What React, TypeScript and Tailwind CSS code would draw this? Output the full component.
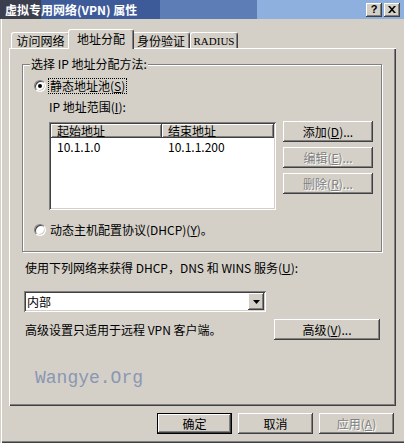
import React from 'react';

const raised =
  'bg-[#d4d0c8] shadow-[inset_-1px_-1px_#404040,inset_1px_1px_#ffffff,inset_-2px_-2px_#808080,inset_2px_2px_#d4d0c8]';
const sunken =
  'bg-white shadow-[inset_1px_1px_#808080,inset_-1px_-1px_#ffffff,inset_2px_2px_#404040,inset_-2px_-2px_#d4d0c8]';
const greyText = 'text-[#808080] [text-shadow:1px_1px_0_#ffffff]';

function Radio({ checked }: { checked?: boolean }) {
  return (
    <span className="flex h-[12px] w-[12px] shrink-0 items-center justify-center rounded-full border border-t-[#808080] border-l-[#808080] border-b-white border-r-white bg-white shadow-[inset_1px_1px_#404040,inset_-1px_-1px_#d4d0c8]">
      {checked && <span className="h-[4px] w-[4px] rounded-full bg-black" />}
    </span>
  );
}

function Btn({
  children,
  disabled,
  isDefault,
  className = '',
}: {
  children: React.ReactNode;
  disabled?: boolean;
  isDefault?: boolean;
  className?: string;
}) {
  if (isDefault) {
    return (
      <div className={`border border-black ${className}`}>
        <div className={`flex h-full w-full items-center justify-center ${raised}`}>{children}</div>
      </div>
    );
  }
  return (
    <div className={`flex items-center justify-center ${raised} ${disabled ? greyText : 'text-black'} ${className}`}>
      {children}
    </div>
  );
}

function GroupBox({ label, children }: { label: string; children: React.ReactNode }) {
  return (
    <div className="relative ml-[13px] mt-[16px] h-[188px] w-[360px] border border-[#808080] shadow-[1px_1px_0_#ffffff,inset_1px_1px_0_#ffffff]">
      <span className="absolute -top-[8px] left-[7px] bg-[#d4d0c8] px-[1px] leading-[14px]">{label}</span>
      {children}
    </div>
  );
}

const tabBase =
  'flex items-center justify-center rounded-t-[3px] border-t border-l border-white border-r border-r-[#404040] shadow-[inset_-1px_0_#808080] bg-[#d4d0c8]';

export default function App() {
  return (
    <div className="h-[443px] w-[404px] overflow-hidden bg-[#d4d0c8] font-['Noto_Sans_CJK_SC','Liberation_Sans',sans-serif] text-[12px] leading-[14px] text-black shadow-[inset_1px_0_#d4d0c8,inset_2px_0_#ffffff,inset_0_-1px_#404040,inset_0_-2px_#808080]">
      {/* title bar */}
      <div className="flex h-[19px] items-center justify-between bg-[linear-gradient(to_right,#3b3e4d_0px,#3b3e4d_41px,#3d5b99_41px,#3d5b99_160px,#5d7db6_160px,#5d7db6_257px,#8eb0de_257px)] pl-[5px] pr-[4px]">
        <span className="font-bold text-white">虚拟专用网络(VPN) 属性</span>
        <div className="flex gap-[2px]">
          <div className={`flex h-[14px] w-[16px] items-center justify-center ${raised}`}>
            <span className="font-['Liberation_Sans'] text-[11px] font-bold leading-none">?</span>
          </div>
          <div className={`flex h-[14px] w-[16px] items-center justify-center ${raised}`}>
            <svg width="8" height="7" viewBox="0 0 8 7">
              <path d="M0 0h2l2 2.2L6 0h2L5 3.5 8 7H6L4 4.8 2 7H0l3-3.5z" fill="#000" />
            </svg>
          </div>
        </div>
      </div>

      {/* tabs */}
      <div className="ml-[11px] mt-[10px] flex h-[19px] items-end">
        <div className={`${tabBase} h-[16px] w-[59px]`}>访问网络</div>
        <div className={`${tabBase} relative z-10 -mx-[2px] -mb-[1px] h-[20px] w-[66px] pb-[2px]`}>地址分配</div>
        <div className={`${tabBase} h-[16px] w-[58px]`}>身份验证</div>
        <div className={`${tabBase} h-[16px] w-[48px] font-['Liberation_Serif'] text-[11px]`}>RADIUS</div>
      </div>

      {/* tab panel */}
      <div className="ml-[9px] flex h-[358px] w-[387px] flex-col shadow-[inset_1px_1px_#ffffff,inset_-1px_-1px_#404040,inset_-2px_-2px_#808080]">
        <GroupBox label="选择 IP 地址分配方法:">
          <div className="flex flex-col pl-[11px] pt-[13px]">
            <div className="flex h-[16px] items-center gap-[2px]">
              <Radio checked />
              <span className="border border-dotted border-black px-[1px]">
                静态地址池(<u>S</u>)
              </span>
            </div>
            <div className="ml-[15px] mt-[6px]">
              IP 地址范围(<u>I</u>):
            </div>
            <div className="ml-[15px] mt-[7px] flex gap-[7px]">
              <div className={`mt-[1px] flex h-[88px] w-[227px] flex-col p-[2px] ${sunken}`}>
                <div className="flex h-[14px]">
                  <div className="flex w-[111px] items-center bg-[#d4d0c8] pl-[6px] shadow-[inset_-1px_-1px_#404040,inset_1px_1px_#ffffff,inset_-2px_-2px_#808080]">
                    起始地址
                  </div>
                  <div className="flex flex-1 items-center bg-[#d4d0c8] pl-[6px] shadow-[inset_-1px_-1px_#404040,inset_1px_1px_#ffffff,inset_-2px_-2px_#808080]">
                    结束地址
                  </div>
                </div>
                <div className="mt-[2px] flex">
                  <span className="w-[111px] pl-[6px]">10.1.1.0</span>
                  <span className="pl-[6px]">10.1.1.200</span>
                </div>
              </div>
              <div className="flex flex-col gap-[5px]">
                <Btn className="h-[21px] w-[90px]">
                  添加(<u>D</u>)...
                </Btn>
                <Btn disabled className="h-[21px] w-[90px]">
                  编辑(<u>E</u>)...
                </Btn>
                <Btn disabled className="h-[21px] w-[90px]">
                  删除(<u>R</u>)...
                </Btn>
              </div>
            </div>
            <div className="mt-[12px] flex h-[16px] items-center gap-[3px]">
              <Radio />
              <span className="px-[1px]">
                动态主机配置协议(DHCP)(<u>Y</u>)。
              </span>
            </div>
          </div>
        </GroupBox>

        <div className="ml-[15px] flex flex-col">
          <div className="mt-[9px] pl-[1px]">
            使用下列网络来获得 DHCP，DNS 和 WINS 服务(<u>U</u>):
          </div>
          <div className={`mt-[16px] flex h-[21px] w-[242px] items-center justify-between p-[2px] ${sunken}`}>
            <span className="pl-[1px]">内部</span>
            <div className={`flex h-[17px] w-[16px] items-center justify-center ${raised}`}>
              <svg width="7" height="4" viewBox="0 0 7 4">
                <path d="M0 0h7L3.5 4z" fill="#000" />
              </svg>
            </div>
          </div>
          <div className="mt-[7px] flex w-[356px] items-center justify-between">
            <span className="pl-[1px]">高级设置只适用于远程 VPN 客户端。</span>
            <Btn className="h-[21px] w-[106px]">
              高级(<u>V</u>)...
            </Btn>
          </div>
          <div className="ml-[11px] mt-[28px] font-['Liberation_Mono'] text-[18px] leading-[20px] text-[#8a97b2]">
            Wangye.Org
          </div>
        </div>
      </div>

      {/* dialog buttons */}
      <div className="mt-[7px] flex justify-end gap-[6px] pr-[10px]">
        <Btn isDefault className="h-[21px] w-[75px]">
          确定
        </Btn>
        <Btn className="h-[21px] w-[75px]">取消</Btn>
        <Btn disabled className="h-[21px] w-[75px]">
          应用(<u>A</u>)
        </Btn>
      </div>
    </div>
  );
}
